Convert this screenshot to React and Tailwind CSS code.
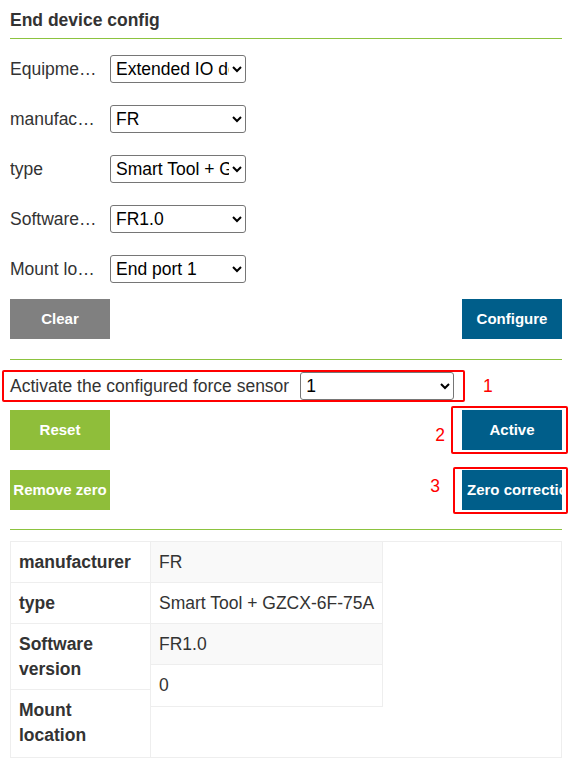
import React from 'react';

const fields = [
  { label: 'Equipment type', value: 'Extended IO device' },
  { label: 'manufacturer', value: 'FR' },
  { label: 'type', value: 'Smart Tool + GZCX-6F-75A' },
  { label: 'Software version', value: 'FR1.0' },
  { label: 'Mount location', value: 'End port 1' },
];

const infoRows = [
  { label: 'manufacturer', h: 'h-[41px]' },
  { label: 'type', h: 'h-[41px]' },
  { label: 'Software version', h: 'h-[66px]' },
  { label: 'Mount location', h: 'flex-1' },
];

const infoValues = ['FR', 'Smart Tool + GZCX-6F-75A', 'FR1.0', '0'];

const Select = ({ value, className }) => (
  <select
    defaultValue={value}
    className={`h-[28px] border border-[#767676] rounded-[3px] bg-white pl-[1px] text-[17.5px] text-black ${className}`}
  >
    <option value={value}>{value}</option>
  </select>
);

const Btn = ({ children, color, className = '' }) => (
  <button
    className={`h-[40px] w-[100px] text-[15px] font-bold text-white overflow-hidden whitespace-nowrap ${color} ${className}`}
  >
    {children}
  </button>
);

const App = () => {
  return (
    <div className="w-[572px] min-h-[764px] bg-white px-[10px] text-[17.5px] text-[#333] font-['Liberation_Sans',Arial,sans-serif]">
      <div className="pt-[10px] pb-[8px] leading-[20px] font-bold border-b border-[#8cc33f]">
        End device config
      </div>

      <div className="flex flex-col gap-[22px] pt-[16px]">
        {fields.map((f) => (
          <div key={f.label} className="flex items-center h-[28px]">
            <div className="w-[100px] pr-[12px] truncate">{f.label}</div>
            <Select value={f.value} className="w-[136px]" />
          </div>
        ))}
      </div>

      <div className="flex justify-between pt-[16px] pb-[20px] border-b border-[#8cc33f]">
        <Btn color="bg-[#808080]">Clear</Btn>
        <Btn color="bg-[#005e8a]">Configure</Btn>
      </div>

      <div className="flex items-center mt-[10px]">
        <div className="-ml-[8px] w-[463px] h-[32px] flex items-center pl-[6px] border-2 border-[#ff0000] rounded-[2px]">
          <span className="whitespace-nowrap">Activate the configured force sensor</span>
          <Select value="1" className="ml-[11px] w-[154px]" />
        </div>
        <span className="ml-[18px] text-[#ff0000]">1</span>
      </div>

      <div className="flex items-start justify-between mt-[8px] h-[40px]">
        <Btn color="bg-[#8fbe3a]">Reset</Btn>
        <div className="flex items-start">
          <span className="mr-[6px] mt-[15px] leading-[20px] text-[#ff0000]">2</span>
          <div className="border-2 border-[#ff0000] rounded-[2px] -mr-[6px] -mt-[4px] pl-[9px] pr-[4px] py-[2px]">
            <Btn color="bg-[#005e8a]">Active</Btn>
          </div>
        </div>
      </div>

      <div className="flex items-start justify-between mt-[20px] h-[60px] border-b border-[#8cc33f]">
        <Btn color="bg-[#8fbe3a]" className="px-[3px]">Remove zero</Btn>
        <div className="flex items-start">
          <span className="mr-[13px] mt-[6px] leading-[20px] text-[#ff0000]">3</span>
          <div className="border-2 border-[#ff0000] rounded-[2px] -mr-[6px] -mt-[3px] pl-[7px] pr-[4px] pt-[1px] pb-[2px]">
            <Btn color="bg-[#005e8a]" className="text-left pl-[5px]">Zero correction</Btn>
          </div>
        </div>
      </div>

      <div className="mt-[11px] flex h-[217px] border border-[#eeeeee]">
        <div className="w-[140px] flex flex-col border-r border-[#eeeeee]">
          {infoRows.map((r, i) => (
            <div
              key={r.label}
              className={`${r.h} px-[8px] py-[8px] leading-[25px] font-bold ${i < infoRows.length - 1 ? 'border-b border-[#eeeeee]' : ''}`}
            >
              {r.label}
            </div>
          ))}
        </div>
        <div className="w-[232px] self-start border-r border-b border-[#eeeeee]">
          {infoValues.map((v, i) => (
            <div
              key={i}
              className={`h-[41px] px-[8px] flex items-center whitespace-nowrap ${i % 2 === 0 ? 'bg-[#f9f9f9]' : 'bg-white'} ${i < infoValues.length - 1 ? 'border-b border-[#eeeeee]' : ''}`}
            >
              {v}
            </div>
          ))}
        </div>
      </div>
    </div>
  );
};

export default App;
